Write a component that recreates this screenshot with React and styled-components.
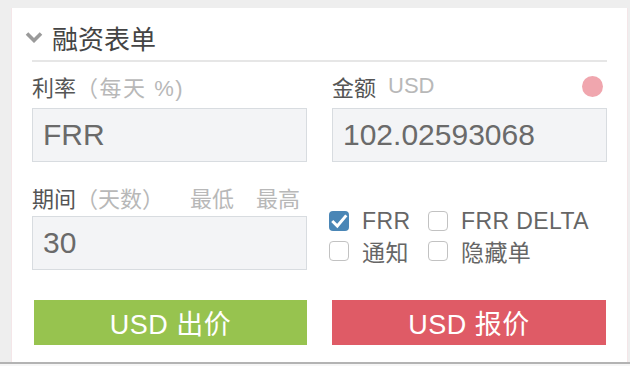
import React, { useState } from 'react'
import styled, { createGlobalStyle } from 'styled-components'

const GlobalStyle = createGlobalStyle`
    html, body {
        margin: 0;
        padding: 0;
        background: #eeeeee;
    }
    body {
        font-family: 'Liberation Sans', 'Noto Sans CJK SC', sans-serif;
    }
`

const Page = styled.div`
    width: 630px;
    height: 366px;
    display: flex;
    flex-direction: column;
    overflow: hidden;
`

const Panel = styled.div`
    margin: 8px 2px 0 11px;
    background: #ffffff;
    border-left: 1px solid #f4e6e8;
    border-right: 1px solid #f4e6e8;
    padding: 0 20px 17px 20px;
`

const BottomLine = styled.div`
    height: 2px;
    background: #b3b3b3;
`

const BottomRest = styled.div`
    flex: 1;
    background: #f6f6f6;
`

const Header = styled.div`
    height: 52px;
    border-bottom: 2px solid #e6e6e6;
    display: flex;
    align-items: center;
`

const HeaderInner = styled.div`
    display: flex;
    align-items: center;
    gap: 9px;
    margin-left: -7px;
    margin-top: 6px;
    font-size: 26px;
    color: #444444;
`

const Grid = styled.div`
    display: grid;
    grid-template-columns: 275px 275px;
    column-gap: 25px;
`

const Column = styled.div`
    display: flex;
    flex-direction: column;
`

const Label = styled.div`
    height: 30px;
    display: flex;
    align-items: center;
    font-size: 22px;
    color: #555555;
    margin-top: ${p => (p.second ? '20px' : '9px')};
    margin-bottom: ${p => (p.second ? '4px' : '7px')};
`

const Hint = styled.span`
    color: #b8b8b8;
    margin-left: ${p => p.gap || 0}px;
    letter-spacing: ${p => p.spread || 0}px;
`

const Dot = styled.span`
    margin-left: auto;
    margin-right: 4px;
    width: 21px;
    height: 21px;
    border-radius: 50%;
    background: #f0a6ae;
`

const Input = styled.input`
    box-sizing: border-box;
    height: 54px;
    width: 100%;
    border: 1px solid #d8dce0;
    background: #f3f4f6;
    padding: 0 10px;
    font-family: inherit;
    font-size: 30px;
    color: #6a6a6a;
    outline: none;
`

const CheckGroup = styled.div`
    margin-top: 44px;
    margin-left: -3px;
    display: grid;
    grid-template-columns: 99px auto;
    grid-auto-rows: 30px;
`

const CheckItem = styled.label`
    display: flex;
    align-items: center;
    gap: 13px;
    font-size: 23px;
    letter-spacing: 0.4px;
    color: #666666;
    cursor: pointer;
`

const Box = styled.span`
    box-sizing: border-box;
    flex-shrink: 0;
    width: 20px;
    height: 20px;
    border-radius: 4px;
    border: ${p => (p.checked ? 'none' : '1.5px solid #c2c2c2')};
    background: ${p => (p.checked ? '#4a86b6' : '#ffffff')};
    display: flex;
    align-items: center;
    justify-content: center;
`

const Buttons = styled.div`
    margin-top: 30px;
    display: grid;
    grid-template-columns: 273px 274px;
    column-gap: 25px;
    padding-left: 2px;
`

const Button = styled.button`
    height: 45px;
    border: none;
    background: ${p => p.color};
    color: #ffffff;
    font-family: inherit;
    font-size: 27px;
    letter-spacing: 0.5px;
    cursor: pointer;
`

function Chevron () {
    return (
        <svg width="18" height="12" viewBox="0 0 18 12">
            <path d="M2 2.5 L9 9.5 L16 2.5" fill="none" stroke="#9a9a9a" strokeWidth="3.6" />
        </svg>
    )
}

function Check ({ label, checked, onToggle }) {
    return (
        <CheckItem onClick={onToggle}>
            <Box checked={checked}>
                {checked && (
                    <svg width="18" height="16" viewBox="0 0 16 14">
                        <path d="M2 7 L6.5 11.5 L14.5 2" fill="none" stroke="#ffffff" strokeWidth="2.6" />
                    </svg>
                )}
            </Box>
            {label}
        </CheckItem>
    )
}

function App () {
    const [checks, setChecks] = useState({ frr: true, delta: false, notify: false, hidden: false })
    const toggle = key => () => setChecks({ ...checks, [key]: !checks[key] })

    return (
        <Page>
            <GlobalStyle />
            <Panel>
                <Header>
                    <HeaderInner>
                        <Chevron />
                        融资表单
                    </HeaderInner>
                </Header>
                <Grid>
                    <Column>
                        <Label>利率<Hint spread={1.5}>（每天 %)</Hint></Label>
                        <Input defaultValue="FRR" />
                        <Label second>期间<Hint>（天数）</Hint><Hint gap={26}>最低</Hint><Hint gap={22}>最高</Hint></Label>
                        <Input defaultValue="30" />
                    </Column>
                    <Column>
                        <Label>金额<Hint gap={12}>USD</Hint><Dot /></Label>
                        <Input defaultValue="102.02593068" />
                        <CheckGroup>
                            <Check label="FRR" checked={checks.frr} onToggle={toggle('frr')} />
                            <Check label="FRR DELTA" checked={checks.delta} onToggle={toggle('delta')} />
                            <Check label="通知" checked={checks.notify} onToggle={toggle('notify')} />
                            <Check label="隐藏单" checked={checks.hidden} onToggle={toggle('hidden')} />
                        </CheckGroup>
                    </Column>
                </Grid>
                <Buttons>
                    <Button color="#97c34f">USD 出价</Button>
                    <Button color="#df5b66">USD 报价</Button>
                </Buttons>
            </Panel>
            <BottomLine />
            <BottomRest />
        </Page>
    )
}

export default App
